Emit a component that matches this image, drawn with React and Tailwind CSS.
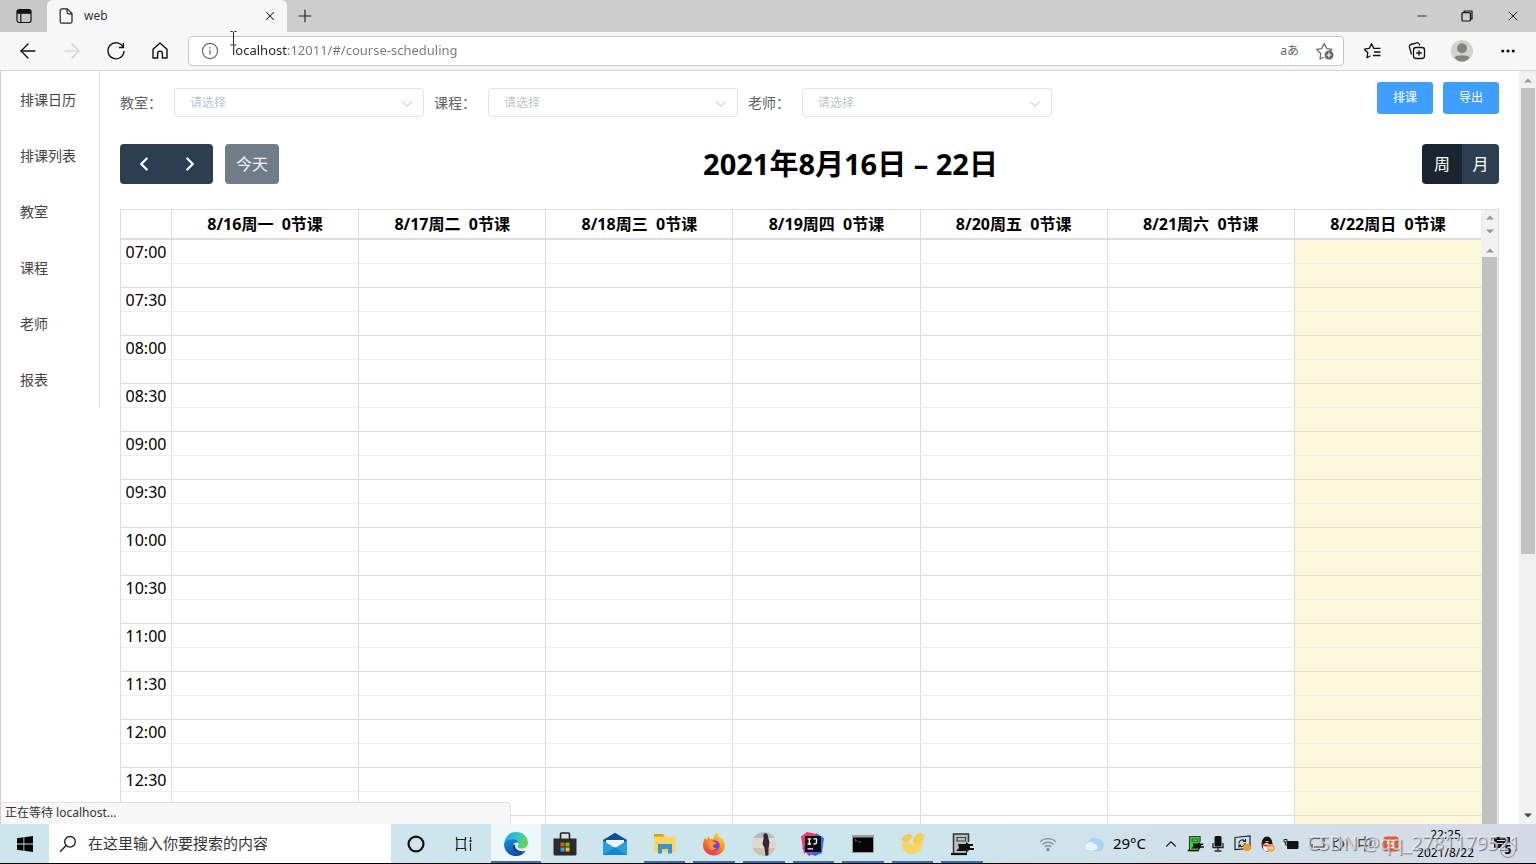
import { useState } from "react";
import {
  ArrowLeft,
  ArrowRight,
  ChevronDown,
  ChevronLeft,
  ChevronRight,
  ChevronUp,
  Ellipsis,
  Minus,
  Plus,
  X,
} from "lucide-react";

const menus = ["排课日历", "排课列表", "教室", "课程", "老师", "报表"];

const filters = [
  { id: "classroom", label: "教室：" },
  { id: "course", label: "课程：" },
  { id: "teacher", label: "老师：" },
];

const days = [
  { date: "8/16", week: "周一", count: 0 },
  { date: "8/17", week: "周二", count: 0 },
  { date: "8/18", week: "周三", count: 0 },
  { date: "8/19", week: "周四", count: 0 },
  { date: "8/20", week: "周五", count: 0 },
  { date: "8/21", week: "周六", count: 0 },
  { date: "8/22", week: "周日", count: 0, today: true },
];

// 15 minute slots, only the half hours get a label
const slots = [];
for (let m = 7 * 60; m < 13 * 60 + 15; m += 15) {
  const label = `${String(Math.floor(m / 60)).padStart(2, "0")}:${String(m % 60).padStart(2, "0")}`;
  slots.push({ key: m, label: m % 30 === 0 ? label : "" });
}

function TabStrip() {
  return (
    <div className="flex h-8 shrink-0 bg-[#cdcdcd]">
      <button aria-label="标签操作" className="flex w-[47px] items-center justify-center rounded-br bg-[#c8c8c8]">
        <svg width="16" height="16" viewBox="0 0 16 16" fill="none" stroke="#111" strokeWidth="1.2">
          <rect x="1" y="1.5" width="14" height="13" rx="2.2" />
          <path d="M1.5 2.600h13v2.600h-13z" fill="#111" />
          <path d="M4.8 5.5v9" />
        </svg>
      </button>
      <div className="flex w-60 items-center rounded-t-md bg-[#f7f7f7] pr-2.5 pl-3">
        <svg width="14" height="16" viewBox="0 0 14 16" fill="none" stroke="#222" strokeWidth="1.2">
          <path d="M3 .8h5.2L13 5.5V13.400a1.800 1.800 0 0 1-1.800 1.800H3a1.800 1.800 0 0 1-1.800-1.800V2.600A1.800 1.800 0 0 1 3 .8z" />
          <path d="M8 1v3.300a1.500 1.500 0 0 0 1.500 1.500H13" />
        </svg>
        <span className="ml-[11px] flex-1 text-xs text-[#333]">web</span>
        <button aria-label="关闭标签页">
          <X size={14} strokeWidth={1.8} color="#222" />
        </button>
      </div>
      <button aria-label="新建标签页" className="ml-2">
        <Plus size={20} strokeWidth={1.4} color="#222" />
      </button>
      <div className="ml-auto flex items-center gap-8 pr-[15px]">
        <button aria-label="最小化">
          <Minus size={14} strokeWidth={1.7} color="#222" />
        </button>
        <button aria-label="还原">
          <svg width="12" height="12" viewBox="0 0 12 12" fill="none" stroke="#111" strokeWidth="1.2">
            <rect x="1" y="2.600" width="8.400" height="8.400" rx="1" />
            <path d="M3.200 2.400V1h7.800v7.800H9.600" />
          </svg>
        </button>
        <button aria-label="关闭">
          <X size={16} strokeWidth={1.5} color="#222" />
        </button>
      </div>
    </div>
  );
}

function AddressBar() {
  const [url, setUrl] = useState("localhost:12011/#/course-scheduling");

  return (
    <div className="flex h-[39px] shrink-0 items-center border-b border-[#d6d6d6] bg-[#f7f7f7] pr-[19px] pl-4">
      <div className="flex w-[172px] items-center gap-5">
        <button aria-label="后退">
          <ArrowLeft size={24} strokeWidth={1.4} color="#111" />
        </button>
        <button aria-label="前进" disabled>
          <ArrowRight size={24} strokeWidth={1.2} color="#ccc" />
        </button>
        <button aria-label="刷新">
          <svg width="24" height="24" viewBox="0 0 24 24" fill="none" stroke="#111" strokeWidth="1.4">
            <path d="M19.200 8.300A8 8 0 1 0 20 12" />
            <path d="M19.400 4v4.500H15" />
          </svg>
        </button>
        <button aria-label="主页">
          <svg width="24" height="24" viewBox="0 0 24 24" fill="none" stroke="#111" strokeWidth="1.400" strokeLinejoin="round">
            <path d="M5 10.300 12 4l7 6.300V19h-4.600v-4.500a2.400 2.400 0 0 0-4.800 0V19H5z" />
          </svg>
        </button>
      </div>
      <div className="flex h-[30px] flex-1 items-center rounded border border-[#c6c6c6] bg-white pr-2 pl-3">
        <svg width="18" height="18" viewBox="0 0 18 18" fill="none" stroke="#666" strokeWidth="1.200">
          <circle cx="9" cy="9" r="7.600" />
          <path d="M9 8v4.800M9 5v1.400" />
        </svg>
        <input
          aria-label="地址"
          value={url}
          onChange={(e) => setUrl(e.target.value)}
          className="ml-[13px] min-w-0 flex-1 bg-linear-to-r from-[#222] from-[55px] to-[#777] to-[55px] bg-clip-text text-[13px] text-transparent outline-none"
        />
        <button aria-label="翻译" className="mr-4 text-xs text-[#666]">
          aあ
        </button>
        <button aria-label="添加到收藏夹">
          <svg width="20" height="20" viewBox="0 0 20 20" fill="none" stroke="#666" strokeWidth="1.200" strokeLinejoin="round">
            <path d="M8.500 16.200 5 18l.8-5.500L1.500 8.400l5.300-.8L9.200 2.600l2.500 5 5.300.8-2 1.800" />
            <circle cx="14" cy="14" r="4.500" fill="#666" stroke="none" />
            <path d="M14 11.500v5M11.500 14h5" stroke="#fff" />
          </svg>
        </button>
      </div>
      <div className="flex items-center gap-5 pl-[19px]">
        <button aria-label="收藏夹">
          <svg width="20" height="20" viewBox="0 0 20 20" fill="none" stroke="#111" strokeWidth="1.300" strokeLinejoin="round">
            <path d="M7.500 14.800 4 16.700l.8-5L1.500 8.200l4.700-.8 2.300-4.600 2.300 4.600h6.700M11 11h6.500M10 14.500h7.500" />
          </svg>
        </button>
        <button aria-label="集锦" className="ml-1">
          <svg width="20" height="20" viewBox="0 0 20 20" fill="none" stroke="#111" strokeWidth="1.300">
            <rect x="6.500" y="6.500" width="11" height="11" rx="2.400" />
            <path d="M12 9.200v5.600M9.200 12h5.600M4.500 13.500 2.400 6A2 2 0 0 1 3.800 3.500l6-1.700a2 2 0 0 1 2.500 1.400l.4 1.400" />
          </svg>
        </button>
        <button aria-label="个人资料" className="ml-1">
          <svg width="22" height="22" viewBox="0 0 22 22">
            <circle cx="11" cy="11" r="11" fill="#d2d1ce" />
            <circle cx="11" cy="8.300" r="5" fill="#84847e" />
            <path d="M3.500 17.500c1.500-3 13.500-3 15 0A10 10 0 0 1 11 21.500a10 10 0 0 1-7.500-4z" fill="#84847e" />
          </svg>
        </button>
        <button aria-label="设置及其他" className="ml-1.5">
          <Ellipsis size={18} strokeWidth={2.200} color="#111" />
        </button>
      </div>
    </div>
  );
}

function Sidebar() {
  return (
    <nav className="w-[99px] shrink-0 self-start border-r border-[#e6e6e6] pt-px">
      {menus.map((menu) => (
        <a key={menu} href="#/" className="block h-14 pl-[19px] text-sm leading-14 text-[#444]">
          {menu}
        </a>
      ))}
    </nav>
  );
}

function Filters() {
  return (
    <div className="flex items-start justify-between pt-[11px]">
      <div className="flex gap-2.5 pt-1.5">
        {filters.map((f) => (
          <div key={f.id} className="flex items-center">
            <label htmlFor={f.id} className="w-[54px] text-sm text-[#606266]">
              {f.label}
            </label>
            <div className="relative">
              <select
                id={f.id}
                defaultValue=""
                className="block h-[29px] w-[250px] appearance-none rounded border border-[#dfe2e8] bg-white pl-[15px] text-xs text-[#c0c4cc]"
              >
                <option value="">请选择</option>
              </select>
              <ChevronDown
                size={18}
                strokeWidth={1.300}
                className="pointer-events-none absolute top-[7px] right-2 text-[#b4b8c0]"
              />
            </div>
          </div>
        ))}
      </div>
      <div className="flex gap-2.5">
        <button className="h-8 w-14 rounded-[3px] bg-[#409eff] text-xs text-white">排课</button>
        <button className="h-8 w-14 rounded-[3px] bg-[#409eff] text-xs text-white">导出</button>
      </div>
    </div>
  );
}

function CalendarToolbar({ view, onChange }) {
  return (
    <div className="mt-[27px] flex h-10 items-center justify-between">
      <div className="flex gap-3">
        <div className="flex rounded bg-[#2c3e50]">
          <button aria-label="上一周" className="flex h-10 w-[47px] items-center justify-center text-white">
            <ChevronLeft size={22} strokeWidth={2.500} />
          </button>
          <button aria-label="下一周" className="flex h-10 w-[46px] items-center justify-center text-white">
            <ChevronRight size={22} strokeWidth={2.500} />
          </button>
        </div>
        <button disabled className="h-10 rounded bg-[#707c88] px-[11px] text-base text-[#eef0f2]">
          今天
        </button>
      </div>
      <h2 className="text-[29px] leading-10 font-bold text-black">2021年8月16日 – 22日</h2>
      <div className="flex text-base text-white">
        <button
          onClick={() => onChange("week")}
          className={`h-10 w-10 rounded-l ${view === "week" ? "bg-[#1a252f]" : "bg-[#2c3e50]"}`}
        >
          周
        </button>
        <button
          onClick={() => onChange("month")}
          className={`h-10 w-[37px] rounded-r ${view === "month" ? "bg-[#1a252f]" : "bg-[#2c3e50]"}`}
        >
          月
        </button>
      </div>
    </div>
  );
}

function Arrow({ down, dark }) {
  return (
    <svg width="8" height="5" viewBox="0 0 8 5" fill={dark ? "#444" : "#999"} className="shrink-0">
      <path d={down ? "M0 .5h8L4 4.500z" : "M0 4.500h8L4 .5z"} />
    </svg>
  );
}

function WeekTable() {
  return (
    <div className="mt-[25px] flex min-h-0 flex-1 items-start overflow-hidden border border-b-0 border-[#ddd]">
      <table className="flex-1 table-fixed border-separate border-spacing-0 text-base text-black">
        <thead>
          <tr>
            <th className="h-[30px] w-[50px] border-b-2 border-[#ddd] p-0"></th>
            {days.map((d) => (
              <th
                key={d.date}
                className="h-[30px] border-b-2 border-l border-[#ddd] p-0 leading-7 font-bold whitespace-pre"
              >
                {`${d.date}${d.week}  ${d.count}节课`}
              </th>
            ))}
          </tr>
        </thead>
        <tbody>
          {slots.map((slot) => (
            <tr key={slot.key}>
              <td
                className={`h-6 border-b p-0 pt-px text-center leading-[22px] ${slot.label ? "border-b-[#eee]" : "border-b-[#ddd]"}`}
              >
                {slot.label}
              </td>
              {days.map((d) => (
                <td
                  key={d.date}
                  className={`h-6 border-b border-l border-l-[#ddd] p-0 ${slot.label ? "border-b-[#eee]" : "border-b-[#ddd]"} ${d.today ? "bg-[#fdf8dc]" : ""}`}
                ></td>
              ))}
            </tr>
          ))}
        </tbody>
      </table>
      <div className="flex w-[17px] flex-col self-stretch bg-[#f1f1f1]">
        <div className="flex h-[30px] flex-col items-center justify-between pt-[5px] pb-1.5">
          <Arrow />
          <Arrow down />
        </div>
        <div className="flex h-[17px] items-center justify-center pt-1">
          <Arrow />
        </div>
        <div className="mx-px flex-1 bg-[#c1c1c1]"></div>
      </div>
    </div>
  );
}

function PageScrollbar() {
  return (
    <div className="flex w-[17px] shrink-0 flex-col items-center bg-[#f1f1f1] pt-[7px] pb-1.5">
      <Arrow />
      <div className="mt-[5px] h-[63%] w-3.5 bg-[#c1c1c1]"></div>
      <div className="flex-1"></div>
      <Arrow down dark />
    </div>
  );
}

function EdgeIcon() {
  return (
    <svg width="24" height="24" viewBox="0 0 24 24">
      <defs>
        <linearGradient id="edgeTop" x1="0" y1="0" x2="1" y2="0.300">
          <stop offset="0" stopColor="#1b9de2" />
          <stop offset="0.500" stopColor="#2cc3cf" />
          <stop offset="1" stopColor="#5fd95a" />
        </linearGradient>
        <linearGradient id="edgeLow" x1="0" y1="0" x2="0.600" y2="1">
          <stop offset="0" stopColor="#1a8fe0" />
          <stop offset="1" stopColor="#0c4a9a" />
        </linearGradient>
      </defs>
      <path d="M.2 11C1 4.500 6 0 12 0c7 0 12 5 12 10.500 0 4-3 6-6.500 6-2.500 0-4-1-4-1.800 0-.7 1-1.200 1-3 0-2.500-2.500-4.500-6-4.500C4.500 7.200 1.500 9 .2 11z" fill="url(#edgeTop)" />
      <path d="M.1 11.500C1 8.500 4.500 7 8.500 7c3 0 5.500 1.500 6 4-1-1-5-.8-5.500 3C8.500 18 12 21 16 21c2.500 0 4.300-.9 5.800-1.800C19.500 22.300 16 24 12 24 5 24-.5 18.500.1 11.500z" fill="url(#edgeLow)" />
      <path d="M9.500 12.500C7.500 17 11 21.500 16.500 21c2.500-.2 4.500-1.300 5.500-2.500-3 1.200-8 .8-10-2-1-1.300-1-2.500-.5-3.500z" fill="#0b3f86" />
    </svg>
  );
}

function StoreIcon() {
  return (
    <svg width="24" height="24" viewBox="0 0 24 24">
      <path d="M7.500 7V2.200c0-.7.500-1.200 1.200-1.200h6.600c.7 0 1.200.5 1.200 1.200V7" fill="none" stroke="#222" strokeWidth="1.600" />
      <path d="M.5 6.500h23V22a1.500 1.500 0 0 1-1.500 1.500H2A1.500 1.500 0 0 1 .5 22z" fill="#2b2b2b" />
      <path d="M7.500 10.500h4v4h-4z" fill="#e8562a" />
      <path d="M12.500 10.500h4v4h-4z" fill="#7fba00" />
      <path d="M7.500 15.500h4v4h-4z" fill="#2aa6ea" />
      <path d="M12.500 15.500h4v4h-4z" fill="#fdb913" />
    </svg>
  );
}

function MailIcon() {
  return (
    <svg width="24" height="24" viewBox="0 0 24 24">
      <path d="M0 8 12 .8 24 8v3H0z" fill="#0f4f9e" />
      <path d="M3 8h18v9H3z" fill="#eef6fc" />
      <path d="M0 8.500 12 16l12-7.500V23H0z" fill="#28a0e0" />
      <path d="m0 23 12-8 12 8z" fill="#1785cf" />
    </svg>
  );
}

function FolderIcon() {
  return (
    <svg width="24" height="24" viewBox="0 0 24 24">
      <path d="M1 2h9l2 3H1z" fill="#d9a01c" />
      <path d="M1 4.500h21.500v15.500H1z" fill="#fbd465" />
      <path d="M5 12h14v9.500h-4v-4.500H9v4.500H5z" fill="#3f93cc" />
    </svg>
  );
}

function FirefoxIcon() {
  return (
    <svg width="24" height="24" viewBox="0 0 24 24">
      <defs>
        <linearGradient id="fox" x1="0.900" y1="0.100" x2="0.300" y2="1">
          <stop offset="0" stopColor="#ffd93b" />
          <stop offset="0.500" stopColor="#ff8a1f" />
          <stop offset="1" stopColor="#f0315b" />
        </linearGradient>
      </defs>
      <path d="M14 .5c2 1.500 3 3.200 3.200 4.500C20.500 6.500 23 9.500 23 13.500 23 19 18 23.500 12 23.500S1 19 1 13c0-3 1-5.500 2.500-7.500L4 8l3-3.500L8 7l4-.5c0-2.500 1-4.800 2-6z" fill="url(#fox)" />
      <circle cx="12.500" cy="13.500" r="5.200" fill="#7a3fd6" />
      <path d="M6.500 9.500c2-1.500 4-1 5.500.5 1.500 0 2.500.7 2.500 1.500-1.500 1-3 .5-3.500 2-.3 1.500 1 3 3.500 2.500-2 3-7 2.500-8-1.500-.4-1.800-.4-3.500 0-5z" fill="#ff9a2a" />
    </svg>
  );
}

function PhotoIcon() {
  return (
    <svg width="24" height="24" viewBox="0 0 24 24">
      <defs>
        <clipPath id="photoClip">
          <circle cx="12" cy="12" r="12" />
        </clipPath>
      </defs>
      <g clipPath="url(#photoClip)">
        <path d="M0 0h24v24H0z" fill="#dedad0" />
        <path d="M0 0h24v6H0z" fill="#aebdc2" />
        <path d="M0 16h24v8H0z" fill="#cec4b2" />
        <path d="M12 4c1-2 3.500-1.500 4 .5l1.500 6-1 6.500V24h-3l-1-8-2-4z" fill="#3b2734" />
        <circle cx="13.500" cy="3.500" r="2.200" fill="#33252b" />
      </g>
    </svg>
  );
}

function IdeaIcon() {
  return (
    <svg width="24" height="24" viewBox="0 0 24 24">
      <path d="M0 4.500 6 0l9 2-3 12-9 8z" fill="#f2386f" />
      <path d="m15 1 8 5-2 15-7 3-6-3z" fill="#2f6fe8" />
      <path d="M1 16 8 9l6 12-6 3z" fill="#9b3fd0" />
      <path d="M4 4h16v16H4z" fill="#0b0b0f" />
      <path d="M6.500 6.800h3.600M6.500 12h3.600M8.300 6.800V12M12.500 6.800h3v3.700c0 1-.8 1.500-1.700 1.500h-1.300M6.500 16.800h5.500" stroke="#fff" strokeWidth="1.300" fill="none" />
    </svg>
  );
}

function CmdIcon() {
  return (
    <svg width="24" height="24" viewBox="0 0 24 24">
      <path d="M1 3h22v18H1z" fill="#9c9c9c" />
      <path d="M2 5.500h20V20H2z" fill="#050505" />
      <path d="m4 7.500 1.500 1L4 9.500M7 10h3" stroke="#aaa" strokeWidth=".6" fill="none" />
    </svg>
  );
}

function BeansIcon() {
  return (
    <svg width="24" height="24" viewBox="0 0 24 24">
      <ellipse cx="17.500" cy="7" rx="7" ry="4.600" transform="rotate(-50 17.500 7)" fill="#f4cf58" />
      <ellipse cx="6" cy="6" rx="5.500" ry="3.500" transform="rotate(-30 6 6)" fill="#f2cb50" />
      <path d="M.5 11.500c5-2 9-1.500 11.500 1.500 3 0 7.500-2 9.500-3.500C23 15 18 22 11 22 5 22 .5 17 .5 11.500z" fill="#f6d563" />
    </svg>
  );
}

function RecorderIcon({ size = 24, color = "#b9c0c2" }) {
  return (
    <svg width={size} height={size} viewBox="0 0 24 24">
      <path d="M3.500 2h15v19h-15z" fill={color} />
      <path d="M3.500 21V2h15v8" fill="none" stroke="#333" strokeWidth="1.500" />
      <path d="M7 5.500h8.500V9H7z" fill="none" stroke="#444" strokeWidth="1.200" />
      <path d="M8 12h8v-2l3 2h4v2h-3v2h4v2h-5l-3 3v-2H6l3-3z" fill="#111" />
      <path d="M1 22h16" stroke="#111" strokeWidth="2.200" />
    </svg>
  );
}

const apps = [
  { name: "Microsoft Edge", Icon: EdgeIcon, open: true, active: true },
  { name: "Microsoft Store", Icon: StoreIcon },
  { name: "邮件", Icon: MailIcon },
  { name: "文件资源管理器", Icon: FolderIcon, open: true },
  { name: "Firefox", Icon: FirefoxIcon, open: true },
  { name: "照片", Icon: PhotoIcon, open: true },
  { name: "IntelliJ IDEA", Icon: IdeaIcon, open: true },
  { name: "命令提示符", Icon: CmdIcon, open: true },
  { name: "Navicat", Icon: BeansIcon, open: true },
  { name: "录屏", Icon: RecorderIcon, open: true },
];

function Tray() {
  return (
    <div className="relative ml-auto flex items-center pr-[26px]">
      <svg width="18" height="18" viewBox="0 0 18 18" fill="none" stroke="#8b9298" strokeWidth="1.300" className="mr-[26px]">
        <path d="M1 7c4.500-4.600 11.500-4.600 16 0M3.500 9.500c3-3 8-3 11 0M6 12c1.600-1.700 4.400-1.700 6 0" />
        <circle cx="9" cy="14.500" r="1.200" fill="#8b9298" />
      </svg>
      <svg width="22" height="18" viewBox="0 0 22 18" className="mr-2">
        <path d="M6 16a5 5 0 0 1-.5-9.500C7 3 11 1.500 14 4c4 0 7 2.500 7 6s-2 6-5 6z" fill="#a9d4f2" />
        <path d="M4 15a4 4 0 0 1 .5-7C7 5.500 10 7 11 9c3 0 4 2 3 5-1 2-9 2-10 1z" fill="#e8f4fc" />
      </svg>
      <span className="mr-4 text-[15px] text-black">29°C</span>
      <ChevronUp size={18} strokeWidth={1.500} color="#222" className="mr-[7px]" />
      <div className="mr-2 flex">
        <RecorderIcon size={17} color="#35d435" />
      </div>
      <svg width="12" height="16" viewBox="0 0 12 16" className="mr-2.5">
        <rect x="2.500" y="0" width="7" height="10.500" rx="1.500" fill="#111" />
        <path d="M1 7v4.500h10V7M6 11.500V14M2.500 15h7" stroke="#222" fill="none" strokeWidth="1.300" />
      </svg>
      <svg width="18" height="17" viewBox="0 0 18 17" fill="none" stroke="#222" strokeWidth="1.200" className="mr-2">
        <path d="M1 2.500 16 1v12.500L1 14.500z" />
        <path d="M5 8.500a3.200 3.200 0 0 1 5.500-2.500M11.500 4v2.500H9M11 8a3.200 3.200 0 0 1-5.500 2.500M5 12.500V10h2" />
        <circle cx="13" cy="12.500" r="3.800" fill="#f59a23" stroke="none" />
      </svg>
      <svg width="15" height="16" viewBox="0 0 15 16" className="mr-2">
        <ellipse cx="7" cy="8" rx="5.500" ry="7.500" fill="#111" />
        <ellipse cx="6.500" cy="11" rx="3.500" ry="4" fill="#fff" />
        <path d="M2 7.500c3 1.500 7 1.500 10 0v2c-3 1.500-7 1.500-10 0z" fill="#e23b2e" />
        <path d="M4.500 5h5L7 6.500z" fill="#f6a821" />
        <circle cx="11" cy="12" r="3.800" fill="#f7a14b" />
        <path d="M9 12h4" stroke="#fff" strokeWidth="1.300" />
      </svg>
      <svg width="16" height="12" viewBox="0 0 16 12" className="mr-2.5">
        <path d="M4.500 3.500H15v7H4.500z" fill="#111" stroke="#111" />
        <path d="M1 1.500h3v2.500H1zM2.500 4v3h2" fill="none" stroke="#222" />
      </svg>
      <svg width="16" height="14" viewBox="0 0 16 14" fill="none" stroke="#333" strokeWidth="1.200" className="mr-2">
        <path d="M1 5V1.500h14V10H5M1 4v5M3 7v5.500h8" />
      </svg>
      <svg width="16" height="14" viewBox="0 0 16 14" fill="none" stroke="#333" strokeWidth="1.200" className="mr-2">
        <path d="M1 4.500h2.500L7.500 1v12L3.500 9.500H1zM10 4.500c1 1.500 1 3.500 0 5M12.500 2.500c2 3 2 6 0 9" />
      </svg>
      <span className="mr-2.5 text-base text-[#444]">中</span>
      <svg width="16" height="16" viewBox="0 0 16 16" className="mr-[18px]">
        <rect x=".5" y=".5" width="15" height="15" rx="3" fill="#ee5a2b" />
        <path d="M11.500 4.500H6.500c-2.500 0-2.500 3 0 3.200h3c2.500.2 2.500 3.600 0 3.800h-5" fill="none" stroke="#fff" strokeWidth="1.700" />
      </svg>
      <div className="mr-5 text-center text-xs leading-[18px] text-black">
        <div>22:25</div>
        <div>2021/8/22</div>
      </div>
      <div className="relative">
        <svg width="16" height="16" viewBox="0 0 16 16">
          <path d="M0 1h16v11H9l-3 3v-3H0z" fill="#111" />
          <path d="M3 4.500h8M3 7.500h6" stroke="#ddd" />
        </svg>
        <span className="absolute top-1.5 left-1.5 size-4 rounded-full border border-[#8d949b] bg-[#d3dae2] text-center text-xs leading-3.5 font-bold text-black">
          5
        </span>
      </div>
      <span className="absolute right-4 text-[19px] whitespace-nowrap text-white/60 [text-shadow:1px_1px_1px_#6f757c]">
        CSDN @qq_2781179521
      </span>
    </div>
  );
}

function Taskbar() {
  return (
    <footer className="flex h-10 shrink-0 border-b border-black bg-linear-to-r from-[#cde5ec] from-60% to-[#d5dae6]">
      <button aria-label="开始" className="flex w-[49px] shrink-0 items-center justify-center">
        <svg width="16" height="16" viewBox="0 0 16 16" fill="#000">
          <path d="M0 2.200 6.500 1.300v6.300H0zM7.300 1.200 16 0v7.600H7.300zM0 8.400h6.500v6.300L0 13.800zM7.300 8.400H16V16l-8.700-1.200z" />
        </svg>
      </button>
      <div className="flex w-[342px] shrink-0 items-center bg-white pl-2.5">
        <svg width="18" height="18" viewBox="0 0 18 18" fill="none" stroke="#222" strokeWidth="1.400">
          <circle cx="11" cy="6.800" r="5.300" />
          <path d="M7.200 10.600 1 16.800" />
        </svg>
        <input
          aria-label="搜索"
          placeholder="在这里输入你要搜索的内容"
          className="ml-[11px] flex-1 text-[15px] text-black outline-none placeholder:text-[#333]"
        />
      </div>
      <button aria-label="Cortana" className="flex w-[50px] shrink-0 items-center justify-center">
        <svg width="18" height="18" viewBox="0 0 16 16" fill="none" stroke="#111" strokeWidth="2">
          <circle cx="8" cy="8" r="6.600" />
        </svg>
      </button>
      <button aria-label="任务视图" className="flex w-[50px] shrink-0 items-center justify-center pr-1">
        <svg width="18" height="16" viewBox="0 0 18 16" fill="none" stroke="#222" strokeWidth="1.200">
          <path d="M1.500 1v2.500h9V1M1.500 15v-2.500h9V15M2 3.500v9M10 3.500v9M15.500 1v2.500M15.500 7v8" />
          <path d="M14.500 4h2v2h-2z" fill="#222" stroke="none" />
        </svg>
      </button>
      <div className="flex w-[496px] shrink-0">
        {apps.map(({ name, Icon, open, active }) => (
          <button
            key={name}
            aria-label={name}
            className={`relative flex flex-1 items-center justify-center ${active ? "bg-[#eef7fa]" : ""}`}
          >
            <Icon />
            {open && (
              <span
                className={`absolute bottom-0 h-0.5 bg-[#3a6ea8] ${active ? "inset-x-0" : "inset-x-1"}`}
              ></span>
            )}
          </button>
        ))}
      </div>
      <Tray />
    </footer>
  );
}

export default function App() {
  const [view, setView] = useState("week");

  return (
    <div className="relative flex h-screen flex-col overflow-hidden bg-white font-['Noto_Sans','Noto_Sans_CJK_SC',sans-serif]">
      <TabStrip />
      <AddressBar />
      <div className="relative flex min-h-0 flex-1 border-l border-[#d0d0d0]">
        <Sidebar />
        <main className="flex min-w-0 flex-1 flex-col px-5">
          <Filters />
          <CalendarToolbar view={view} onChange={setView} />
          <WeekTable />
        </main>
        <PageScrollbar />
        <div className="absolute bottom-0 left-0 h-[22px] w-[510px] rounded-tr border-t border-r border-[#e2e2e2] bg-[#f7f7f7] pl-1 text-xs leading-5 text-[#333]">
          正在等待 localhost...
        </div>
      </div>
      <Taskbar />
      {/* text cursor */}
      <svg width="7" height="15" viewBox="0 0 7 15" fill="none" stroke="#222" className="pointer-events-none absolute top-[31px] left-[230px]">
        <path d="M.5.5h2l1 1 1-1h2M3.500 1v12M.5 14h2l1-1 1 1h2" />
      </svg>
    </div>
  );
}
